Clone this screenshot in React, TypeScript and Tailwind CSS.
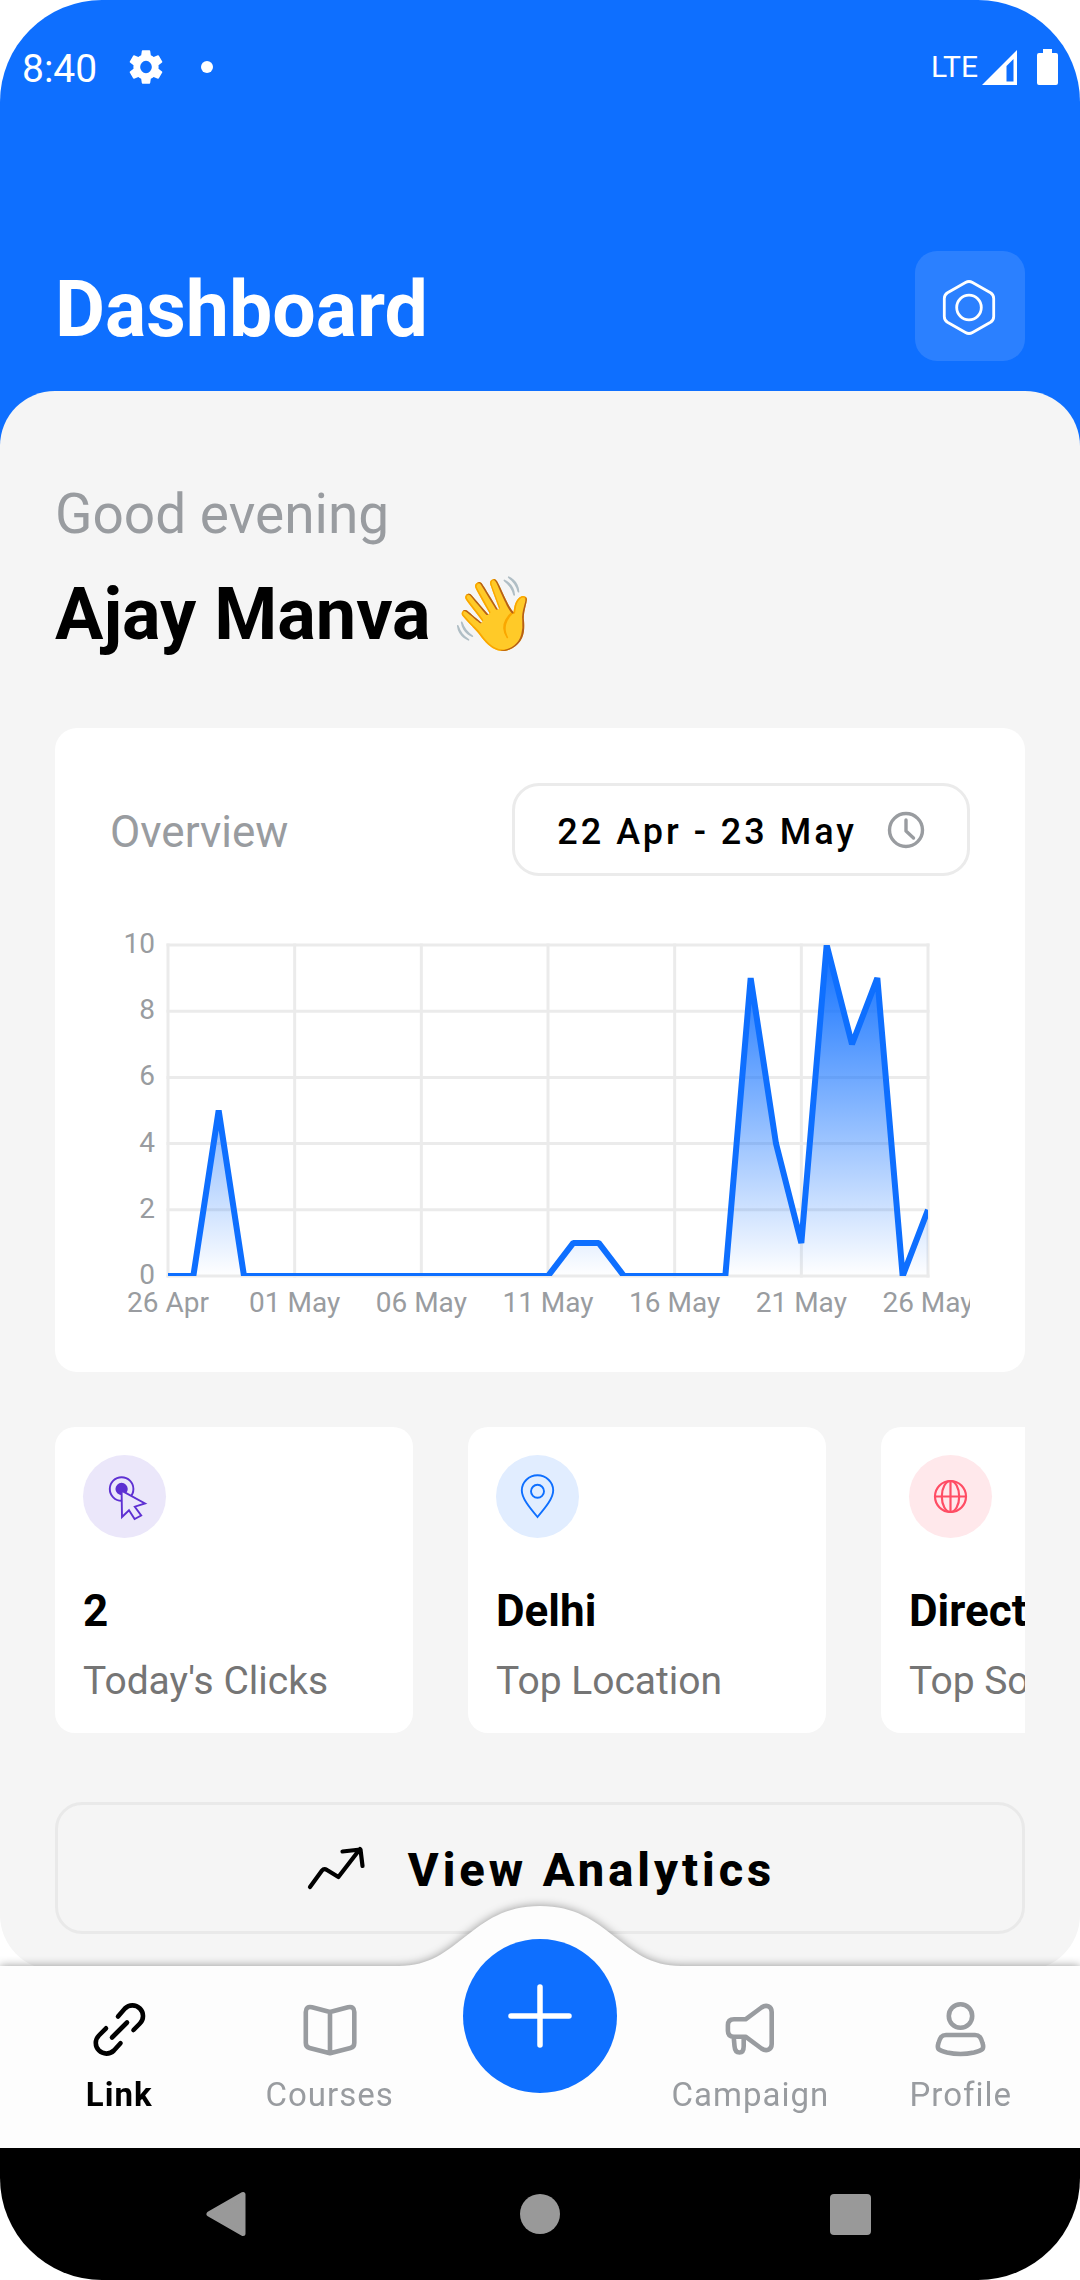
import type { ReactNode } from "react";

const clicks = [
  0, 0, 5, 0, 0, 0, 0, 0, 0, 0, 0, 0, 0, 0, 0, 0, 1, 1, 0, 0, 0, 0, 0, 9, 4, 1, 10, 7, 9, 0, 2,
];
const dates = ["26 Apr", "01 May", "06 May", "11 May", "16 May", "21 May", "26 May"];
const levels = [10, 8, 6, 4, 2, 0];

const plot = { left: 58, right: 818, top: 28, bottom: 359 };

function OverviewChart() {
  const x = (i: number) => plot.left + ((plot.right - plot.left) * i) / (clicks.length - 1);
  const y = (v: number) => plot.bottom - ((plot.bottom - plot.top) * v) / 10;
  const line = clicks.map((v, i) => `${x(i)},${y(v)}`).join(" ");
  return (
    <svg
      viewBox="0 0 860 405"
      className="mt-[41px] block h-auto w-full"
      role="img"
      aria-label="Clicks per day"
    >
      <defs>
        <linearGradient id="area" x1="0" y1={plot.top} x2="0" y2={plot.bottom} gradientUnits="userSpaceOnUse">
          <stop offset="0" stopColor="#0e6fff" />
          <stop offset="1" stopColor="#0e6fff" stopOpacity="0" />
        </linearGradient>
        <clipPath id="plot">
          <rect x={plot.left} y={plot.top} width={plot.right - plot.left} height={plot.bottom - plot.top} />
        </clipPath>
      </defs>
      <g stroke="#ebebeb" strokeWidth="3" strokeLinecap="square">
        {levels.map((v) => (
          <line key={v} x1={plot.left} x2={plot.right} y1={y(v)} y2={y(v)} />
        ))}
        {dates.map((d, i) => (
          <line key={d} x1={x(i * 5)} x2={x(i * 5)} y1={plot.top} y2={plot.bottom} />
        ))}
      </g>
      <g clipPath="url(#plot)">
        <polygon
          points={`${plot.left},${plot.bottom} ${line} ${plot.right},${plot.bottom}`}
          fill="url(#area)"
        />
        <polyline points={line} fill="none" stroke="#0e6fff" strokeWidth="6" strokeLinejoin="bevel" />
      </g>
      <g fill="#999ca0" fontSize="28">
        {levels.map((v) => (
          <text key={v} x="45" y={y(v) + 8} textAnchor="end">
            {v}
          </text>
        ))}
        {dates.map((d, i) => (
          <text key={d} x={x(i * 5)} y="395" textAnchor="middle">
            {d}
          </text>
        ))}
      </g>
    </svg>
  );
}

function StatCard(props: { value: string; label: string; tint: string; children: ReactNode }) {
  return (
    <article className="w-[358px] shrink-0 rounded-[20px] bg-white px-7 pt-7 pb-[30px]">
      <div className={`size-[83px] rounded-full ${props.tint}`}>
        <svg viewBox="0 0 83 83" className="size-full" fill="none" aria-hidden="true">
          {props.children}
        </svg>
      </div>
      <p className="mt-[47px] text-[44px] leading-[52px] font-bold whitespace-nowrap text-black">{props.value}</p>
      <p className="mt-[22px] text-[39px] leading-[44px] whitespace-nowrap text-[#757575]">{props.label}</p>
    </article>
  );
}

function NavItem(props: { label: string; active?: boolean; children: ReactNode }) {
  return (
    <a
      href="#"
      aria-current={props.active ? "page" : undefined}
      className={
        props.active
          ? "flex flex-col items-center font-bold text-black"
          : "flex flex-col items-center text-[#999ca0]"
      }
    >
      <svg
        viewBox="0 0 66 66"
        className="size-[66px]"
        fill="none"
        stroke="currentColor"
        strokeWidth="4.6"
        strokeLinecap="round"
        strokeLinejoin="round"
        aria-hidden="true"
      >
        {props.children}
      </svg>
      <span className="mt-3 text-[33px] leading-10 tracking-[1px]">{props.label}</span>
    </a>
  );
}

export default function App() {
  return (
    <div className="flex min-h-screen flex-col overflow-hidden rounded-[102px] bg-white font-['Roboto',sans-serif]">
      <header className="bg-[#0e6fff] pt-[42px] pb-[85px] text-white">
        <div className="flex h-[50px] items-center px-[22px]">
          <span className="pt-1 text-[39px] leading-[50px]">8:40</span>
          <svg viewBox="0 0 24 24" className="ml-7 size-[42px]" fill="currentColor" aria-hidden="true">
            <path d="M19.14 12.94c.04-.3.06-.61.06-.94 0-.32-.02-.64-.07-.94l2.03-1.58a.49.49 0 0 0 .12-.61l-1.92-3.32a.49.49 0 0 0-.59-.22l-2.39.96a7 7 0 0 0-1.62-.94l-.36-2.54a.48.48 0 0 0-.48-.41h-3.84a.47.47 0 0 0-.47.41l-.36 2.54c-.59.24-1.13.57-1.62.94l-2.39-.96a.48.48 0 0 0-.59.22L2.74 8.87a.47.47 0 0 0 .12.61l2.03 1.58c-.05.3-.09.63-.09.94s.02.64.07.94l-2.03 1.58a.49.49 0 0 0-.12.61l1.92 3.32c.12.22.37.29.59.22l2.39-.96c.5.38 1.03.7 1.62.94l.36 2.54c.05.24.24.41.48.41h3.84c.24 0 .44-.17.47-.41l.36-2.54a6.8 6.8 0 0 0 1.62-.94l2.39.96c.22.08.47 0 .59-.22l1.92-3.32a.47.47 0 0 0-.12-.61zM12 15.6a3.61 3.61 0 0 1 0-7.2 3.61 3.61 0 0 1 0 7.2" />
          </svg>
          <span className="ml-[34px] size-3 rounded-full bg-white" />
          <span className="ml-auto text-[30px] leading-[50px]">LTE</span>
          <svg viewBox="0 0 35 35" className="ml-1 size-[35px]" aria-hidden="true">
            <path fill="currentColor" fillRule="evenodd" d="M35 0v35H0zM31.500 9 24.500 16V31.500H31.500z" />
          </svg>
          <svg viewBox="0 0 21 36" className="ml-5 h-9 w-[21px]" fill="currentColor" aria-hidden="true">
            <path d="M6 0h9v4h4a2 2 0 0 1 2 2v28a2 2 0 0 1-2 2H2a2 2 0 0 1-2-2V6a2 2 0 0 1 2-2h4z" />
          </svg>
        </div>
        <div className="mt-[159px] flex items-center justify-between px-[55px]">
          <h1 className="pt-2 text-[77px] leading-[90px] font-bold">Dashboard</h1>
          <button type="button" aria-label="Settings" className="size-[110px] rounded-[22px] bg-white/12">
            <svg viewBox="0 0 110 110" className="size-full" fill="none" stroke="currentColor" strokeWidth="2.8" aria-hidden="true">
              <path d="M57.500 31.500 75.500 41.700Q78.700 43.700 78.700 47.500V65.500Q78.700 69.300 75.500 71.300L57.500 81.500Q54 83.500 50.500 81.500L32.500 71.300Q29.300 69.300 29.300 65.500V47.500Q29.300 43.700 32.500 41.700L50.500 31.500Q54 29.500 57.500 31.500Z" />
              <circle cx="54" cy="56.500" r="12.300" />
            </svg>
          </button>
        </div>
      </header>

      <main className="-mt-[55px] flex-1 rounded-[55px] bg-[#f5f5f5] px-[55px] pt-[91px] pb-9">
        <p className="text-[55px] leading-[64px] text-[#999ca0]">Good evening</p>
        <h2 className="mt-[27px] text-[72px] leading-[84px] font-bold text-black">Ajay Manva 👋</h2>

        <section className="mt-[71px] rounded-[22px] bg-white px-[55px] pt-[55px] pb-[50px]">
          <div className="flex items-center justify-between">
            <h3 className="pt-1 text-[44px] leading-[52px] text-[#999ca0]">Overview</h3>
            <button
              type="button"
              className="flex h-[93px] items-center gap-[30px] rounded-[27px] border-3 border-[#ebebeb] px-[42px] text-[36px] font-medium tracking-[3px] text-black"
            >
              <span className="pt-1">22 Apr - 23 May</span>
              <svg viewBox="0 0 38 38" className="size-[38px]" fill="none" stroke="#999ca0" strokeWidth="3.400" strokeLinecap="round" strokeLinejoin="round" aria-hidden="true">
                <circle cx="19" cy="19" r="16.500" />
                <path d="M19 9v11l7.500 7" />
              </svg>
            </button>
          </div>
          <OverviewChart />
        </section>

        <div className="mt-[55px] flex gap-[55px] overflow-x-auto [scrollbar-width:none]">
          <StatCard value="2" label="Today's Clicks" tint="bg-[#ebe7fa]">
            <g stroke="#5e30d2" strokeWidth="1.900">
              <circle cx="38.600" cy="34" r="11.800" />
              <circle cx="38.600" cy="34" r="5.200" fill="#5e30d2" />
              <path fill="#ebe7fa" d="M38.600 35.700 62 48.500 51.800 51.700 58.200 60.500 51.600 64 46 55.300 39 62Z" />
            </g>
          </StatCard>
          <StatCard value="Delhi" label="Top Location" tint="bg-[#e1edff]">
            <g stroke="#0e6fff" strokeWidth="1.900">
              <path d="M41.500 62C33 52 25.800 43 25.800 35.500A15.700 15.200 0 0 1 57.200 35.500C57.200 43 50 52 41.500 62Z" />
              <circle cx="41.500" cy="36.300" r="6.500" />
            </g>
          </StatCard>
          <StatCard value="Direct" label="Top Source" tint="bg-[#ffe8eb]">
            <g stroke="#ff4d64" strokeWidth="2.200">
              <circle cx="41.500" cy="41.500" r="15.500" />
              <ellipse cx="41.500" cy="41.500" rx="8.700" ry="15.500" />
              <path d="M41.500 26v31M26 41.500h31" />
            </g>
          </StatCard>
        </div>

        <button
          type="button"
          className="mt-[69px] flex h-[132px] w-full items-center justify-center gap-[42px] rounded-[27px] border-3 border-[#e9e9e9] text-[47px] font-extrabold tracking-[4px] text-black"
        >
          <svg viewBox="0 0 61 48" className="h-12 w-[61px]" fill="none" stroke="currentColor" strokeWidth="4.200" strokeLinecap="round" strokeLinejoin="round" aria-hidden="true">
            <path d="M5 43 17 26.500Q19 24 22 26L33.400 33 55 5M37.500 7.500 55.500 5.500 57.500 22" />
          </svg>
          <span className="pt-1">View Analytics</span>
        </button>
      </main>

      <nav className="relative z-10 -mt-1 h-[182px]">
        <div className="absolute inset-0 drop-shadow-[0_0_5px_rgba(0,0,0,0.4)]">
          <div className="h-full bg-[#fdfdfd]" />
          <svg viewBox="0 0 282 62" className="absolute -top-[60px] left-1/2 h-[62px] w-[282px] -translate-x-1/2" aria-hidden="true">
            <path fill="#fdfdfd" d="M0 60C61 60 71 0 141 0S221 60 282 60V62H0Z" />
          </svg>
        </div>
        <div className="relative grid grid-cols-5 px-[14px] pt-[31px]">
          <NavItem label="Link" active>
            <path d="M20 31.300 12.900 38.500A10.600 10.600 0 0 0 27.900 53.500L34.500 46.300M47.500 33 53.900 26.500A10.600 10.600 0 0 0 38.900 11.500L32 19.500M26 40.500 41 25.500" />
          </NavItem>
          <NavItem label="Courses">
            <path d="M33 15 15 10.300Q8.800 9 8.800 15V46Q8.800 50 12.500 51L33 56.200 53.500 51Q57.300 50 57.300 46V15Q57.300 9 51 10.300L33 15V56" />
          </NavItem>
          <div className="relative">
            <button
              type="button"
              aria-label="Create"
              className="absolute -top-[58px] left-1/2 size-[154px] -translate-x-1/2 rounded-full bg-[#0e6fff] text-white"
            >
              <svg viewBox="0 0 154 154" className="size-full" fill="none" stroke="currentColor" strokeWidth="5.500" strokeLinecap="round" aria-hidden="true">
                <path d="M77 48v58M48 77h58" />
              </svg>
            </button>
          </div>
          <NavItem label="Campaign">
            <path d="M28.500 22.300H17Q10.900 22.300 10.900 28.300V33.700Q10.900 39.700 17 39.700H28.500L44.500 51.500C49.500 55 54.700 52.500 54.700 47V15C54.700 9.500 49.500 7 44.500 10.500ZM16.700 40 17.500 49Q18 55.500 22.500 55.500 26.700 55.500 26.700 49V40" />
          </NavItem>
          <NavItem label="Profile">
            <circle cx="32.500" cy="19" r="11.700" />
            <path d="M18 38H47C51.500 38 53 40.500 54.500 46 56.500 52 55 53.200 46 55.500 38 57.300 27 57.300 19 55.500 10 53.200 8.500 52 10.500 46 12 40.500 13.500 38 18 38Z" />
          </NavItem>
        </div>
      </nav>

      <div className="grid h-[132px] grid-cols-3 place-items-center bg-black px-[74px] text-[#999]">
        <button type="button" aria-label="Back">
          <svg viewBox="0 0 48 48" className="size-12" fill="currentColor" stroke="currentColor" strokeWidth="5" strokeLinejoin="round" aria-hidden="true">
            <path d="M4 24 38 4.500V43.500Z" />
          </svg>
        </button>
        <button type="button" aria-label="Home" className="size-10 rounded-full bg-[#999]" />
        <button type="button" aria-label="Recent apps" className="size-[41px] rounded bg-[#999]" />
      </div>
    </div>
  );
}
